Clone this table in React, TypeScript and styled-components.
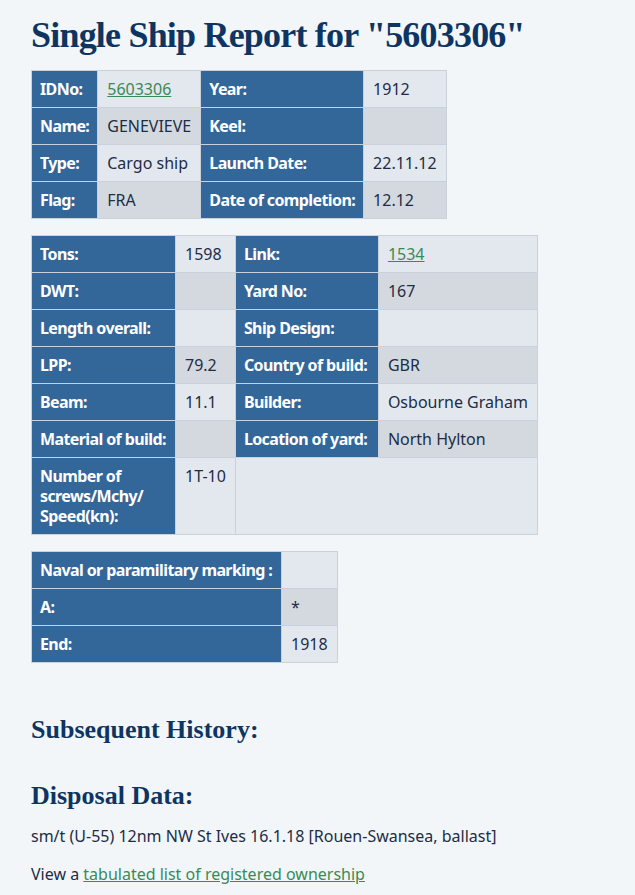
import React from "react";
import styled, { createGlobalStyle } from "styled-components";

const GlobalStyle = createGlobalStyle`
  body {
    margin: 0;
    background: #f2f6f9;
    font-family: "Noto Sans", "Open Sans", sans-serif;
    color: #1d2d44;
  }
`;

const Page = styled.div`
  padding: 14px 31px 20px;
`;

const Title = styled.h1`
  font-family: "Liberation Serif", "DejaVu Serif", serif;
  font-weight: bold;
  font-size: 36px;
  color: #0e3561;
  margin: 0 0 14px;
  letter-spacing: -0.8px;
`;

const SubTitle = styled.h2`
  font-family: "Liberation Serif", "DejaVu Serif", serif;
  font-weight: bold;
  font-size: 26px;
  color: #0e3561;
  margin: 0;
`;

const Section = styled.div<{ $top: number }>`
  margin-top: ${(p) => p.$top}px;
`;

const Table = styled.table`
  border-collapse: collapse;
  border: 1px solid #c9d1da;
  margin-bottom: 16px;
`;

const Label = styled.td<{ $w?: number }>`
  background: #336699;
  color: #ffffff;
  font-weight: bold;
  font-size: 16px;
  letter-spacing: -0.6px;
  line-height: 20px;
  padding: 8px 8px;
  border: 1px solid #c9d1da;
  vertical-align: top;
  height: 20px;
  ${(p) => (p.$w ? `width: ${p.$w}px;` : "")}
`;

const Value = styled.td<{ $dark?: boolean; $w?: number }>`
  background: ${(p) => (p.$dark ? "#d4d9df" : "#e3e8ef")};
  font-size: 16px;
  line-height: 20px;
  padding: 8px 9px;
  border: 1px solid #c9d1da;
  vertical-align: top;
  white-space: nowrap;
  color: #1d2d44;
  ${(p) => (p.$w ? `width: ${p.$w}px;` : "")}
`;

const Link = styled.a`
  color: #3a8a55;
  text-decoration: underline;
`;

const Text = styled.p`
  font-size: 16px;
  margin: 0;
  line-height: 22px;
`;

export default function App() {
  return (
    <>
      <GlobalStyle />
      <Page>
        <Title>Single Ship Report for "5603306"</Title>
        <Table>
          <tbody>
            <tr>
              <Label>IDNo:</Label>
              <Value><Link href="#">5603306</Link></Value>
              <Label>Year:</Label>
              <Value $w={62}>1912</Value>
            </tr>
            <tr>
              <Label>Name:</Label>
              <Value $dark>GENEVIEVE</Value>
              <Label>Keel:</Label>
              <Value $dark></Value>
            </tr>
            <tr>
              <Label>Type:</Label>
              <Value>Cargo ship</Value>
              <Label>Launch Date:</Label>
              <Value>22.11.12</Value>
            </tr>
            <tr>
              <Label>Flag:</Label>
              <Value $dark>FRA</Value>
              <Label>Date of completion:</Label>
              <Value $dark>12.12</Value>
            </tr>
          </tbody>
        </Table>

        <Table>
          <tbody>
            <tr>
              <Label $w={127}>Tons:</Label>
              <Value $w={37}>1598</Value>
              <Label $w={126}>Link:</Label>
              <Value><Link href="#">1534</Link></Value>
            </tr>
            <tr>
              <Label>DWT:</Label>
              <Value $dark></Value>
              <Label>Yard No:</Label>
              <Value $dark>167</Value>
            </tr>
            <tr>
              <Label>Length overall:</Label>
              <Value></Value>
              <Label>Ship Design:</Label>
              <Value></Value>
            </tr>
            <tr>
              <Label>LPP:</Label>
              <Value $dark>79.2</Value>
              <Label>Country of build:</Label>
              <Value $dark>GBR</Value>
            </tr>
            <tr>
              <Label>Beam:</Label>
              <Value>11.1</Value>
              <Label>Builder:</Label>
              <Value>Osbourne Graham</Value>
            </tr>
            <tr>
              <Label>Material of build:</Label>
              <Value $dark></Value>
              <Label>Location of yard:</Label>
              <Value $dark>North Hylton</Value>
            </tr>
            <tr>
              <Label>
                Number of
                <br />
                screws/Mchy/
                <br />
                Speed(kn):
              </Label>
              <Value>1T-10</Value>
              <Value colSpan={2}></Value>
            </tr>
          </tbody>
        </Table>

        <Table>
          <tbody>
            <tr>
              <Label $w={233}>Naval or paramilitary marking :</Label>
              <Value $w={33}></Value>
            </tr>
            <tr>
              <Label>A:</Label>
              <Value $dark>*</Value>
            </tr>
            <tr>
              <Label>End:</Label>
              <Value>1918</Value>
            </tr>
          </tbody>
        </Table>

        <Section $top={52}>
          <SubTitle>Subsequent History:</SubTitle>
        </Section>
        <Section $top={36}>
          <SubTitle>Disposal Data:</SubTitle>
        </Section>
        <Section $top={14}>
          <Text>sm/t (U-55) 12nm NW St Ives 16.1.18 [Rouen-Swansea, ballast]</Text>
        </Section>
        <Section $top={16}>
          <Text>
            View a <Link href="#">tabulated list of registered ownership</Link>
          </Text>
        </Section>
      </Page>
    </>
  );
}
